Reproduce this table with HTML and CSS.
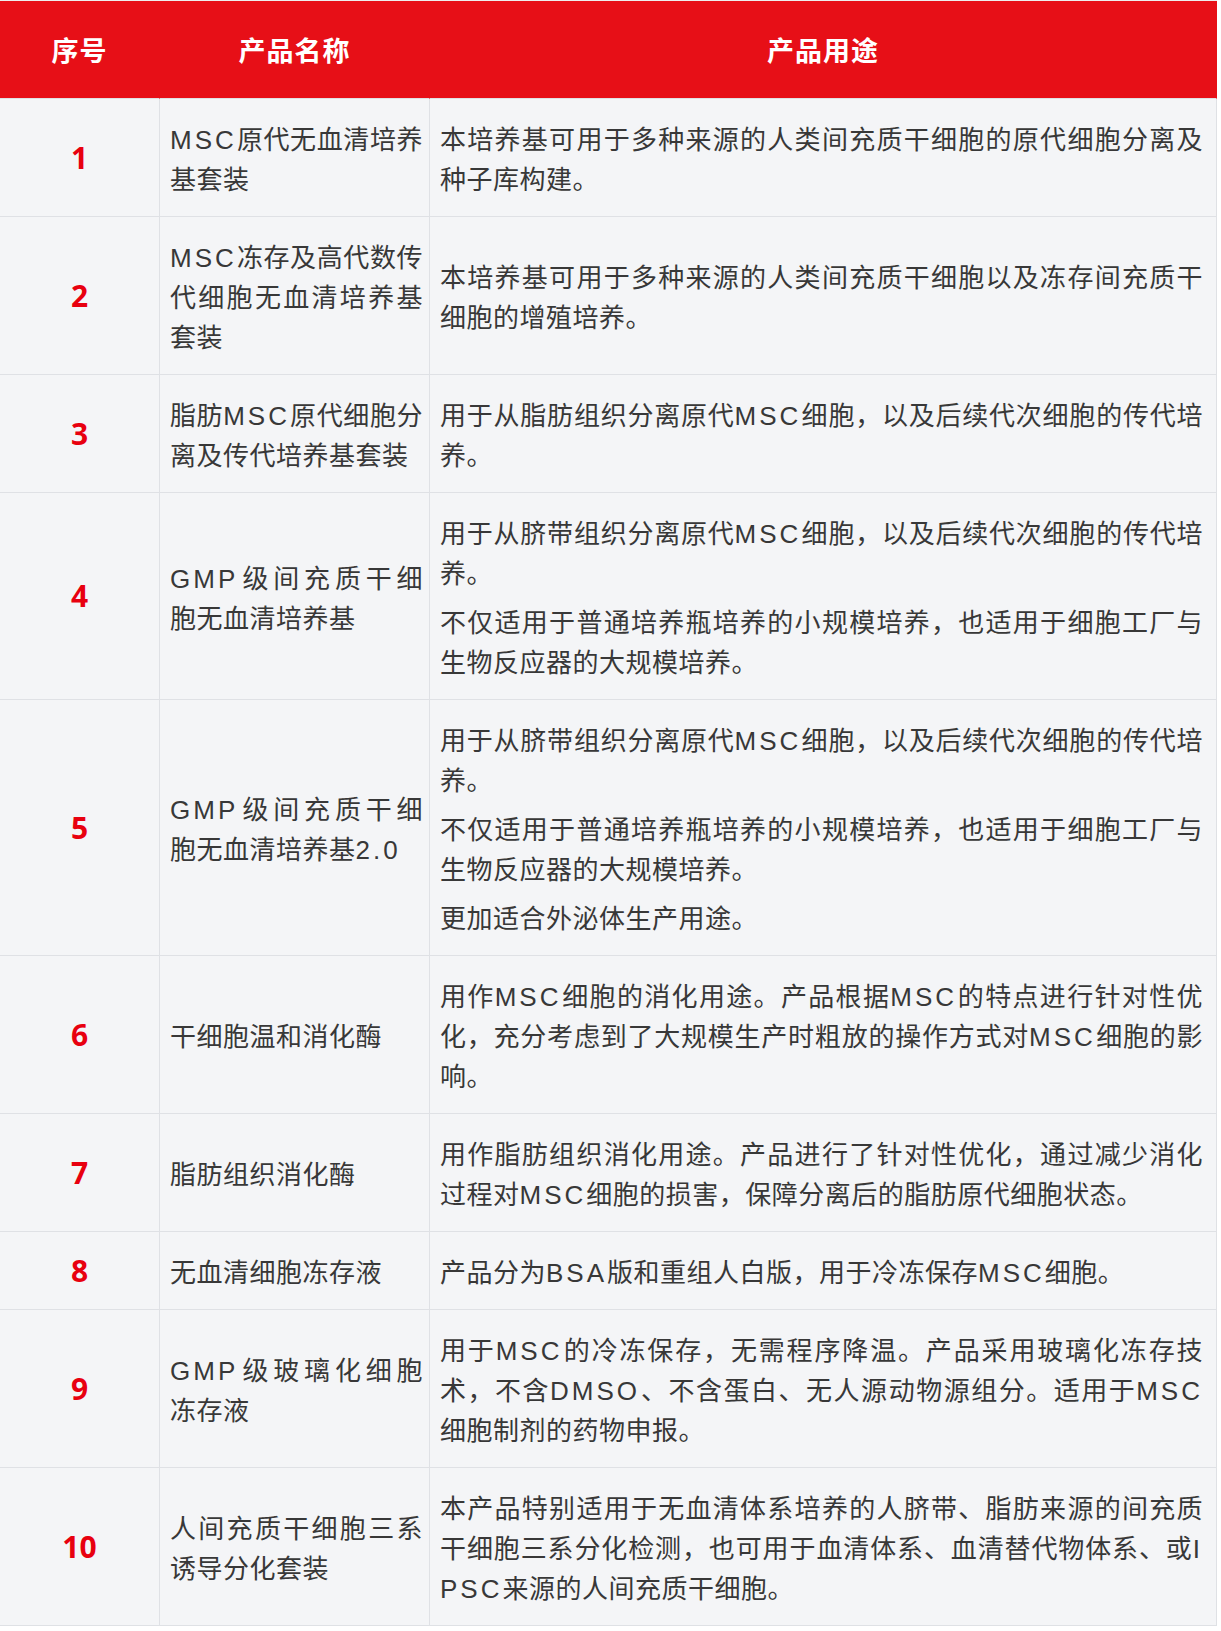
FILE: index.html
```html
<!DOCTYPE html>
<html lang="zh-CN">
<head>
<meta charset="utf-8">
<title>产品列表</title>
<link rel="stylesheet" href="styles.css">
</head>
<body>
<div class="spec-table" role="table">
  <div class="row head" role="row">
    <div class="cell" role="columnheader">序号</div>
    <div class="cell" role="columnheader">产品名称</div>
    <div class="cell" role="columnheader">产品用途</div>
  </div>

  <div class="row" role="row">
    <div class="cell num" role="cell">1</div>
    <div class="cell name" role="cell"><p><span class="en">MSC</span>原代无血清培养基套装</p></div>
    <div class="cell desc" role="cell"><p>本培养基可用于多种来源的人类间充质干细胞的原代细胞分离及种子库构建。</p></div>
  </div>

  <div class="row" role="row">
    <div class="cell num" role="cell">2</div>
    <div class="cell name" role="cell"><p><span class="en">MSC</span>冻存及高代数传代细胞无血清培养基套装</p></div>
    <div class="cell desc" role="cell"><p>本培养基可用于多种来源的人类间充质干细胞以及冻存间充质干细胞的增殖培养。</p></div>
  </div>

  <div class="row" role="row">
    <div class="cell num" role="cell">3</div>
    <div class="cell name" role="cell"><p>脂肪<span class="en">MSC</span>原代细胞分离及传代培养基套装</p></div>
    <div class="cell desc" role="cell"><p>用于从脂肪组织分离原代<span class="en">MSC</span>细胞，以及后续代次细胞的传代培养。</p></div>
  </div>

  <div class="row" role="row">
    <div class="cell num" role="cell">4</div>
    <div class="cell name" role="cell"><p><span class="en">GMP</span>级间充质干细胞无血清培养基</p></div>
    <div class="cell desc" role="cell">
      <p>用于从脐带组织分离原代<span class="en">MSC</span>细胞，以及后续代次细胞的传代培养。</p>
      <p>不仅适用于普通培养瓶培养的小规模培养，也适用于细胞工厂与生物反应器的大规模培养。</p>
    </div>
  </div>

  <div class="row" role="row">
    <div class="cell num" role="cell">5</div>
    <div class="cell name" role="cell"><p><span class="en">GMP</span>级间充质干细胞无血清培养基<span class="en">2.0</span></p></div>
    <div class="cell desc" role="cell">
      <p>用于从脐带组织分离原代<span class="en">MSC</span>细胞，以及后续代次细胞的传代培养。</p>
      <p>不仅适用于普通培养瓶培养的小规模培养，也适用于细胞工厂与生物反应器的大规模培养。</p>
      <p>更加适合外泌体生产用途。</p>
    </div>
  </div>

  <div class="row" role="row">
    <div class="cell num" role="cell">6</div>
    <div class="cell name" role="cell"><p>干细胞温和消化酶</p></div>
    <div class="cell desc" role="cell"><p>用作<span class="en">MSC</span>细胞的消化用途。产品根据<span class="en">MSC</span>的特点进行针对性优化，充分考虑到了大规模生产时粗放的操作方式对<span class="en">MSC</span>细胞的影响。</p></div>
  </div>

  <div class="row" role="row">
    <div class="cell num" role="cell">7</div>
    <div class="cell name" role="cell"><p>脂肪组织消化酶</p></div>
    <div class="cell desc" role="cell"><p>用作脂肪组织消化用途。产品进行了针对性优化，通过减少消化过程对<span class="en">MSC</span>细胞的损害，保障分离后的脂肪原代细胞状态。</p></div>
  </div>

  <div class="row" role="row">
    <div class="cell num" role="cell">8</div>
    <div class="cell name" role="cell"><p>无血清细胞冻存液</p></div>
    <div class="cell desc" role="cell"><p>产品分为<span class="en">BSA</span>版和重组人白版，用于冷冻保存<span class="en">MSC</span>细胞。</p></div>
  </div>

  <div class="row" role="row">
    <div class="cell num" role="cell">9</div>
    <div class="cell name" role="cell"><p><span class="en">GMP</span>级玻璃化细胞冻存液</p></div>
    <div class="cell desc" role="cell"><p>用于<span class="en">MSC</span>的冷冻保存，无需程序降温。产品采用玻璃化冻存技术，不含<span class="en">DMSO</span>、不含蛋白、无人源动物源组分。适用于<span class="en">MSC</span>细胞制剂的药物申报。</p></div>
  </div>

  <div class="row" role="row">
    <div class="cell num" role="cell">10</div>
    <div class="cell name" role="cell"><p>人间充质干细胞三系诱导分化套装</p></div>
    <div class="cell desc" role="cell"><p>本产品特别适用于无血清体系培养的人脐带、脂肪来源的间充质干细胞三系分化检测，也可用于血清体系、血清替代物体系、或<span class="en">IPSC</span>来源的人间充质干细胞。</p></div>
  </div>
</div>
</body>
</html>
```

FILE: styles.css
```css
* {
  box-sizing: border-box;
}

body {
  margin: 0;
  background: #ffffff;
  font-family: "Noto Sans CJK SC", sans-serif;
}

.spec-table {
  width: 1217px;
  display: grid;
  grid-template-columns: 160px 270px 787px;
  border-top: 1px solid #eeeeee;
}

.row {
  display: contents;
}

.cell {
  display: flex;
  flex-direction: column;
  justify-content: center;
  background: #f4f5f7;
  border-right: 1px solid #dfe1e5;
  border-bottom: 1px solid #dfe1e5;
}

.head .cell {
  height: 98px;
  align-items: center;
  background: #e70f17;
  border-right-color: #e70f17;
  color: #ffffff;
  font-size: 27px;
  font-weight: 700;
  letter-spacing: 1px;
  line-height: 40px;
}

.num {
  align-items: center;
  color: #e8000f;
  font-family: "Open Sans", "Liberation Sans", sans-serif;
  font-size: 30px;
  font-weight: 700;
  line-height: 40px;
}

.name,
.desc {
  color: #383838;
  font-size: 26px;
  letter-spacing: 0.5px;
  line-height: 40px;
  text-align: justify;
  word-break: break-all;
}

.name {
  padding: 19px 6px 18px 10px;
}

.desc {
  padding: 19px 13px 18px 10px;
}

.name p,
.desc p {
  margin: 0;
}

.desc p + p {
  margin-top: 9px;
}

.en {
  font-family: "Liberation Sans", "Noto Sans CJK SC", sans-serif;
  letter-spacing: 3px;
  line-height: 1;
}
```
